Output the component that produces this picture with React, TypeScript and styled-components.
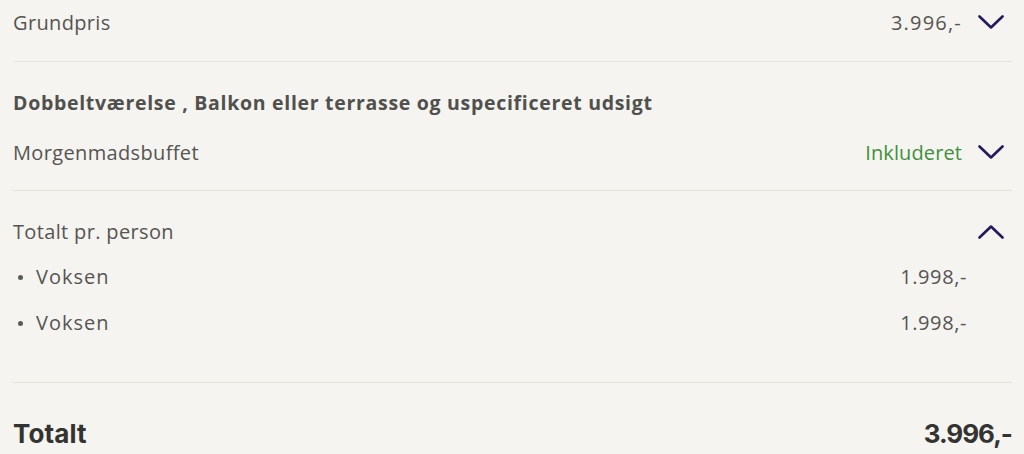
import React from "react";
import styled, { createGlobalStyle } from "styled-components";

const Global = createGlobalStyle`
  html, body { margin: 0; padding: 0; background: #f5f4f0; }
  body { font-family: "Open Sans", Lato, sans-serif; color: #555552; }
`;

const Page = styled.div`
  width: 1024px;
  height: 454px;
  overflow: hidden;
  padding: 0 12px 0 13px;
  box-sizing: border-box;
  background: #f5f4f0;
`;

const Section = styled.section<{ $pt: number; $pb: number; $divider?: boolean }>`
  padding-top: ${(p) => p.$pt}px;
  padding-bottom: ${(p) => p.$pb}px;
  border-bottom: ${(p) => (p.$divider ? "1px solid #e4e3de" : "none")};
  display: flex;
  flex-direction: column;
`;

const Row = styled.div<{ $mt?: number }>`
  display: flex;
  align-items: center;
  justify-content: space-between;
  height: 24px;
  margin-top: ${(p) => p.$mt ?? 0}px;
`;

const Label = styled.span`
  font-size: 20px;
  letter-spacing: 0.35px;
  color: #555552;
`;

const Heading = styled.h3`
  margin: 0;
  height: 24px;
  line-height: 24px;
  font-size: 19.5px;
  font-weight: 700;
  color: #50504d;
  letter-spacing: 0.7px;
`;

const Right = styled.div`
  display: flex;
  align-items: center;
  gap: 16px;
`;

const Value = styled.span<{ $green?: boolean }>`
  font-size: 20px;
  color: ${(p) => (p.$green ? "#438f3d" : "#555552")};
  letter-spacing: ${(p) => (p.$green ? "0.1px" : "1.2px")};
`;

const Bullet = styled.span`
  display: flex;
  align-items: center;
  font-size: 20px;
  letter-spacing: 1px;
  color: #555552;
  &::before {
    content: "";
    width: 5px;
    height: 5px;
    border-radius: 50%;
    background: #5a5a57;
    margin: 2px 13px 0 5px;
  }
`;

const SubValue = styled.span`
  font-size: 20px;
  color: #555552;
  margin-right: 45px;
  letter-spacing: 0.6px;
`;

const TotalRow = styled.div`
  display: flex;
  justify-content: space-between;
  align-items: center;
  height: 30px;
`;

const TotalText = styled.span<{ $tight?: boolean }>`
  font-family: Inter, Lato, sans-serif;
  font-size: 26px;
  font-weight: 700;
  color: #333331;
  letter-spacing: ${(p) => (p.$tight ? "-1px" : "0.1px")};
`;

const Chevron = ({ up }: { up?: boolean }) => (
  <svg width="26" height="15" viewBox="0 0 26 15" style={{ marginRight: 8 }}>
    <path
      d={up ? "M1.5 13.5 L13 2.5 L24.5 13.5" : "M1.5 1.5 L13 12.5 L24.5 1.5"}
      fill="none"
      stroke="#1f1b5c"
      strokeWidth="2.6"
      strokeLinecap="round"
      strokeLinejoin="round"
    />
  </svg>
);

export default function App() {
  return (
    <>
      <Global />
      <Page>
        <Section $pt={10} $pb={27} $divider>
          <Row>
            <Label>Grundpris</Label>
            <Right>
              <Value>3.996,-</Value>
              <Chevron />
            </Right>
          </Row>
        </Section>
        <Section $pt={29} $pb={26} $divider>
          <Heading>Dobbeltværelse , Balkon eller terrasse og uspecificeret udsigt</Heading>
          <Row $mt={25}>
            <Label>Morgenmadsbuffet</Label>
            <Right>
              <Value $green>Inkluderet</Value>
              <Chevron />
            </Right>
          </Row>
        </Section>
        <Section $pt={28} $pb={48} $divider>
          <Row>
            <Label>Totalt pr. person</Label>
            <Right>
              <Chevron up />
            </Right>
          </Row>
          <Row $mt={21}>
            <Bullet>Voksen</Bullet>
            <SubValue>1.998,-</SubValue>
          </Row>
          <Row $mt={22}>
            <Bullet>Voksen</Bullet>
            <SubValue>1.998,-</SubValue>
          </Row>
        </Section>
        <Section $pt={35} $pb={0}>
          <TotalRow>
            <TotalText>Totalt</TotalText>
            <TotalText $tight>3.996,-</TotalText>
          </TotalRow>
        </Section>
      </Page>
    </>
  );
}
